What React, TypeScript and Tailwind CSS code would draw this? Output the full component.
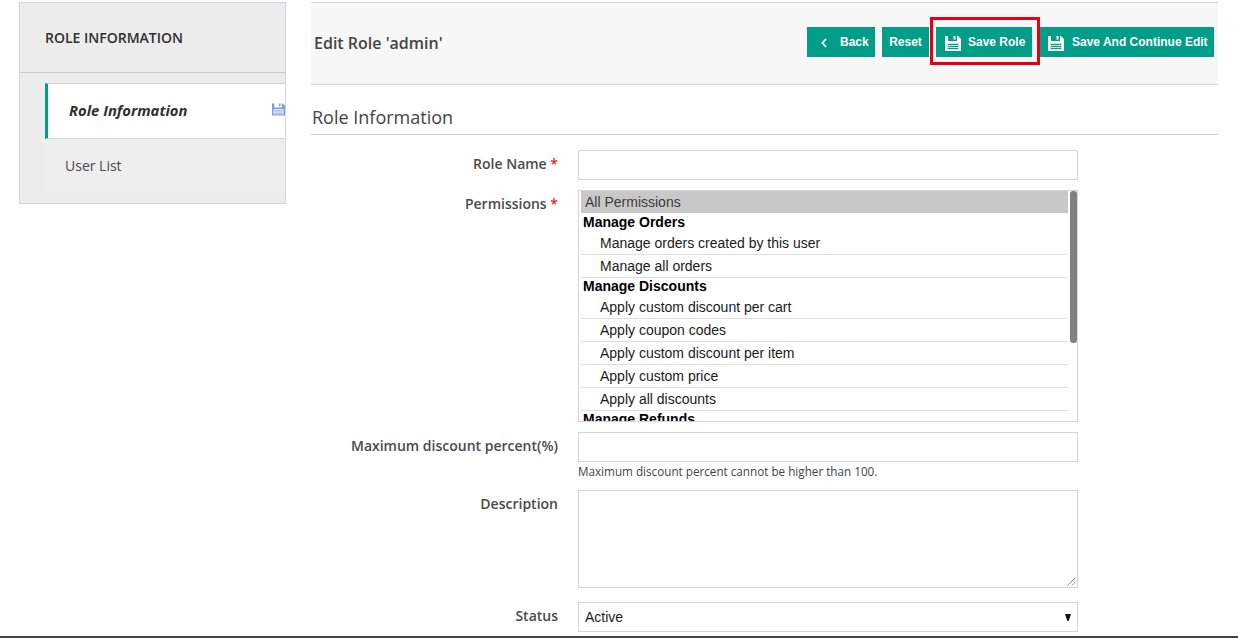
const open = "font-['Open_Sans',sans-serif]";
const arial = "font-['Liberation_Sans',Arial,sans-serif]";

function Disk({ color = "white", panel = "#c4e8df", line = "#009d88", className = "" }: { color?: string; panel?: string; line?: string; className?: string }) {
  return (
    <svg viewBox="0 0 16 15" className={className}>
      <path d="M0 0h3v5h9V0h1l3 3v12H0z" fill={color} />
      <rect x="8.5" y="0" width="2" height="3.5" fill={color} />
      <rect x="2" y="7" width="12" height="6.5" fill={panel} />
      <path d="M3 8.5h10M3 10.5h10M3 12.5h10" stroke={line} strokeWidth="1" />
    </svg>
  );
}

function Btn({ children, className = "" }: { children: React.ReactNode; className?: string }) {
  return (
    <button className={`h-[30px] bg-[#009d88] text-white text-[12px] font-bold flex items-center ${arial} ${className}`}>
      {children}
    </button>
  );
}

function Label({ text, req, className = "" }: { text: string; req?: boolean; className?: string }) {
  return (
    <div className={`w-[247px] text-right text-[14px] leading-[20px] font-semibold text-[#4a4a4a] ${open} ${className}`}>
      {text}
      {req && <span className="text-[#e02b27]"> *</span>}
    </div>
  );
}

const Group = ({ children }: { children: React.ReactNode }) => (
  <div className="h-[19px] pl-[2px] text-[14px] leading-[18px] font-bold text-black -mt-[1px]">{children}</div>
);
const Opt = ({ children }: { children: React.ReactNode }) => (
  <div className="h-[23px] pl-[19px] text-[14px] leading-[22px] text-[#1a1a1a] border-b border-[#dedede]">{children}</div>
);

export default function App() {
  return (
    <div className={`w-[1238px] h-[638px] overflow-hidden bg-white flex flex-col ${open}`}>
      <div className="flex-1 min-h-0 flex items-start pt-[2px] pl-[19px] pr-[20px] gap-[25px]">
        {/* Sidebar */}
        <aside className="w-[267px] h-[202px] border border-[#d4d4dc] bg-[#ececec] shrink-0">
          <div className="h-[70px] border-b border-[#c8c8c8] pl-[25px] flex items-center text-[14px] font-semibold text-[#303030]">
            ROLE INFORMATION
          </div>
          <div className="pl-[25px] pt-[10px]">
            <div className="h-[56px] bg-white border-y border-[#d4d4dc] border-l-[3px] border-l-[#009d88] flex items-center justify-between pl-[21px] box-border">
              <span className="text-[14.8px] font-bold italic text-[#303030] -mt-[1px]">Role Information</span>
              <Disk color="#7d9ce0" panel="#ffffff" line="#7d9ce0" className="w-[13px] h-[13px] mb-[3px]" />
            </div>
            <div className="h-[53px] bg-[#eeeeee] flex items-center pl-[20px] text-[14px] text-[#4a4a4a]">User List</div>
          </div>
        </aside>

        {/* Main */}
        <main className="flex-1 min-w-0">
          <header className="h-[83px] bg-[#f7f7f7] border-y border-[#d4d4dc] flex items-center justify-between pl-[3px] pr-[4px] pb-[4px]">
            <h1 className="text-[16px] font-semibold text-[#444444] mt-[2px]">Edit Role 'admin'</h1>
            <div className="flex items-center gap-[7px]">
              <Btn className="w-[68px] pl-[14px]">
                <svg viewBox="0 0 6 10" className="w-[6px] h-[10px] mr-[13px] mt-[2px]">
                  <path d="M5 1L1.5 5L5 9" fill="none" stroke="white" strokeWidth="1.8" />
                </svg>
                Back
              </Btn>
              <Btn className="w-[47px] justify-center">Reset</Btn>
              <div className="relative">
                <Btn className="w-[96px] pl-[9px]">
                  <Disk className="w-[16px] h-[15px] mr-[7px] mt-[3px]" />
                  Save Role
                </Btn>
                <div className="absolute -left-[6px] -right-[8px] -top-[10px] -bottom-[8px] border-[3px] border-[#e60012]" />
              </div>
              <Btn className="w-[174px] ml-[1px] pl-[8px]">
                <Disk className="w-[16px] h-[15px] mr-[8px] mt-[3px]" />
                Save And Continue Edit
              </Btn>
            </div>
          </header>

          <div className="h-[50px] border-b border-[#c8c8c8] pl-[1px] pt-[19px] text-[18px] leading-[26px] text-[#444444]">
            Role Information
          </div>

          <form className="pt-[15px] flex flex-col">
            <div className="flex gap-[20px]">
              <Label text="Role Name" req className="pt-[4px]" />
              <div className="w-[500px] h-[30px] border border-[#d4d4dc] bg-white" />
            </div>

            <div className="flex gap-[20px] mt-[10px]">
              <Label text="Permissions" req className="pt-[4px]" />
              <div className={`relative w-[500px] h-[232px] border border-[#d4d4dc] bg-white overflow-hidden pl-[2px] pr-[9px] ${arial}`}>
                <div className="h-[22px] bg-[#c8c8c8] pl-[4px] text-[14px] leading-[22px] text-[#3c3c3c] mb-[1px]">All Permissions</div>
                <Group>Manage Orders</Group>
                <Opt>Manage orders created by this user</Opt>
                <Opt>Manage all orders</Opt>
                <Group>Manage Discounts</Group>
                <Opt>Apply custom discount per cart</Opt>
                <Opt>Apply coupon codes</Opt>
                <Opt>Apply custom discount per item</Opt>
                <Opt>Apply custom price</Opt>
                <Opt>Apply all discounts</Opt>
                <Group>Manage Refunds</Group>
                <div className="absolute right-0 top-0 w-[7px] h-[152px] rounded-[3px] bg-[#808080]" />
              </div>
            </div>

            <div className="flex gap-[20px] mt-[10px]">
              <Label text="Maximum discount percent(%)" className="pt-[4px]" />
              <div>
                <div className="w-[500px] h-[30px] border border-[#d4d4dc] bg-white" />
                <div className="text-[11.7px] leading-[18px] text-[#444444]">Maximum discount percent cannot be higher than 100.</div>
              </div>
            </div>

            <div className="flex gap-[20px] mt-[10px]">
              <Label text="Description" className="pt-[4px]" />
              <div className="relative w-[500px] h-[98px] border border-[#d4d4dc] bg-white">
                <svg viewBox="0 0 9 9" className="absolute right-[1px] bottom-[1px] w-[9px] h-[9px]">
                  <path d="M0.5 8.5L8.5 0.5M5 8.5L8.5 5" stroke="#666" strokeWidth="1" strokeDasharray="1.2 0.4" />
                </svg>
              </div>
            </div>

            <div className="flex gap-[20px] mt-[14px]">
              <Label text="Status" className="pt-[4px]" />
              <div className={`w-[500px] h-[30px] border border-[#d4d4dc] bg-white flex items-center justify-between pl-[6px] pr-[6px] text-[14px] text-[#1a1a1a] ${arial}`}>
                <span>Active</span>
                <svg viewBox="0 0 6 7" className="w-[6px] h-[7px] mt-[1px]">
                  <path d="M0 0h6L3.6 7H2.4z" fill="#111" />
                </svg>
              </div>
            </div>
          </form>
        </main>
      </div>
      <div className="h-[2px] bg-[#444444] shrink-0" />
    </div>
  );
}
